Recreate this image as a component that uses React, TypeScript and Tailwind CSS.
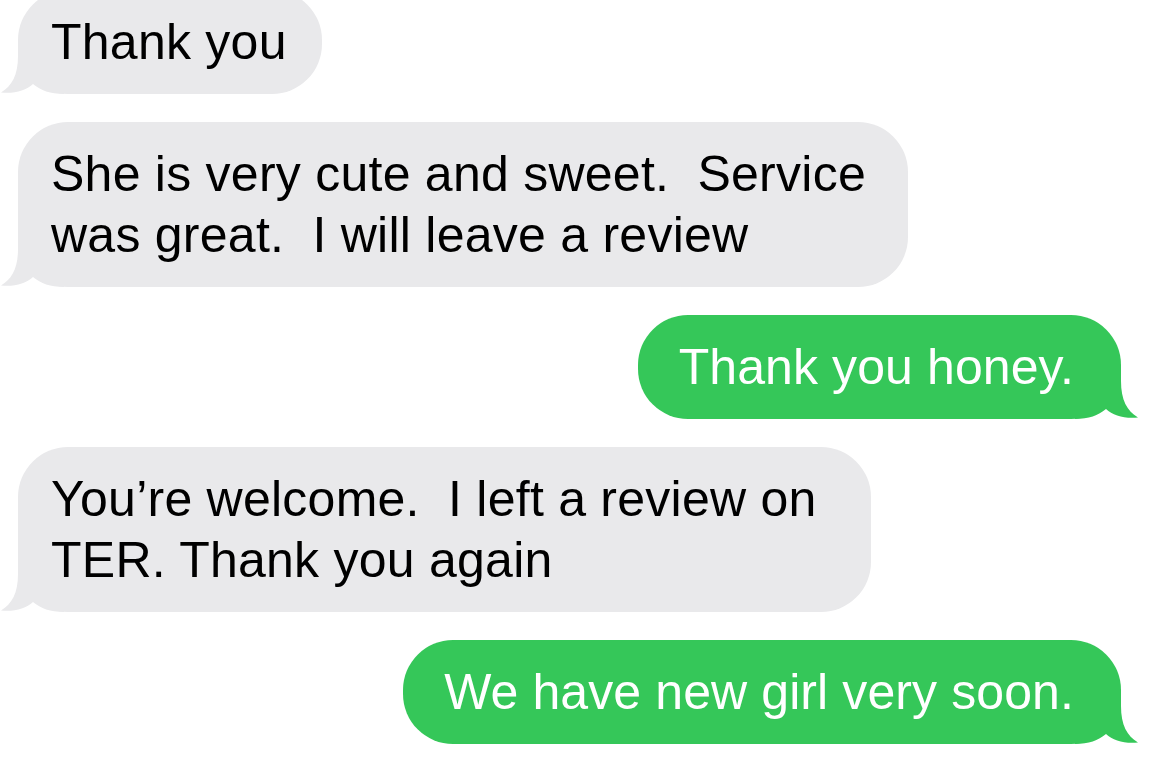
import React from "react";

const TAIL =
  "M18 0 L18 14 C18 33 12 44 1 50.5 C14 52 26 48.5 33 42 C41 48.5 50 52 64 52 L64 0 Z";

const LeftTail = ({ color }: { color: string }) => (
  <svg
    className="absolute bottom-0 left-[-18px]"
    width="64"
    height="52"
    viewBox="0 0 64 52"
  >
    <path d={TAIL} fill={color} />
  </svg>
);

const RightTail = ({ color }: { color: string }) => (
  <svg
    className="absolute bottom-0 right-[-18px] -scale-x-100"
    width="64"
    height="52"
    viewBox="0 0 64 52"
  >
    <path d={TAIL} fill={color} />
  </svg>
);

const Received = ({
  children,
  pr,
}: {
  children: React.ReactNode;
  pr: string;
}) => (
  <div className="flex justify-start">
    <div
      className={`relative rounded-[50px] bg-[#e9e9eb] pl-[33px] ${pr} py-[21.5px] text-[50px] leading-[61px] tracking-[0.25px] text-black whitespace-pre`}
    >
      <LeftTail color="#e9e9eb" />
      <span className="relative">{children}</span>
    </div>
  </div>
);

const Sent = ({ children }: { children: React.ReactNode }) => (
  <div className="flex justify-end">
    <div className="relative rounded-[50px] bg-[#35c759] pl-[41px] pr-[47px] py-[21.5px] text-[50px] leading-[61px] tracking-[0.1px] text-white whitespace-pre">
      <RightTail color="#35c759" />
      <span className="relative">{children}</span>
    </div>
  </div>
);

export default function App() {
  return (
    <div
      className="w-[1172px] h-[763px] overflow-hidden bg-white"
      style={{ fontFamily: '"Liberation Sans", Arial, sans-serif' }}
    >
      <div className="flex flex-col gap-[28px] -mt-[10px] pl-[18px] pr-[51px]">
        <Received pr="pr-[35px]">Thank you</Received>
        <Received pr="pr-[42px]">
          {"She is very cute and sweet.  Service\nwas great.  I will leave a review"}
        </Received>
        <Sent>Thank you honey.</Sent>
        <Received pr="pr-[54px]">
          {"You\u2019re welcome.  I left a review on\nTER. Thank you again"}
        </Received>
        <Sent>We have new girl very soon.</Sent>
      </div>
    </div>
  );
}
